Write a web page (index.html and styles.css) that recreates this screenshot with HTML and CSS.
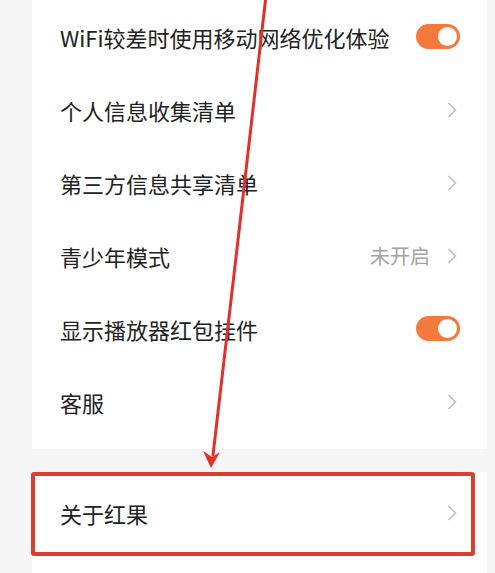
FILE: index.html
```html
<!DOCTYPE html>
<html lang="zh-CN">
<head>
<meta charset="utf-8">
<link rel="stylesheet" href="styles.css">
</head>
<body>
<div class="page">
  <div class="card card-top">
    <div class="row"><span class="label">WiFi较差时使用移动网络优化体验</span><span class="toggle"><span class="knob"></span></span></div>
    <div class="row"><span class="label">个人信息收集清单</span><svg class="chev" viewBox="0 0 10 16"><path d="M1.5 1 L8.5 8 L1.5 15"/></svg></div>
    <div class="row"><span class="label">第三方信息共享清单</span><svg class="chev" viewBox="0 0 10 16"><path d="M1.5 1 L8.5 8 L1.5 15"/></svg></div>
    <div class="row"><span class="label">青少年模式</span><span class="value">未开启</span><svg class="chev" viewBox="0 0 10 16"><path d="M1.5 1 L8.5 8 L1.5 15"/></svg></div>
    <div class="row"><span class="label">显示播放器红包挂件</span><span class="toggle"><span class="knob"></span></span></div>
    <div class="row"><span class="label">客服</span><svg class="chev" viewBox="0 0 10 16"><path d="M1.5 1 L8.5 8 L1.5 15"/></svg></div>
  </div>
  <div class="card card-bottom">
    <div class="row"><span class="label">关于红果</span><svg class="chev" viewBox="0 0 10 16"><path d="M1.5 1 L8.5 8 L1.5 15"/></svg></div>
  </div>
</div>
<div class="highlight"></div>
<svg class="arrow" width="495" height="573" viewBox="0 0 495 573">
  <path d="M265.5 0 L238 240 L213 455" fill="none" stroke="#e2302c" stroke-width="3" stroke-linecap="round"/>
  <path d="M203 451 L211 468 L220 452 L212 457 Z" fill="#e2302c"/>
</svg>
</body>
</html>
```

FILE: styles.css
```css
html, body {
  margin: 0;
  padding: 0;
  background: #f5f5f5;
}
body {
  width: 495px;
  height: 573px;
  overflow: hidden;
  position: relative;
  font-family: "Noto Sans CJK SC", "Noto Sans", sans-serif;
}
.page {
  padding: 0 8px 0 32px;
  display: flex;
  flex-direction: column;
  gap: 23px;
}
.card {
  background: #fefefe;
  display: flex;
  flex-direction: column;
}
.card-top {
  padding: 0 0 11px;
}
.card-bottom {
  padding: 4px 0 30px;
}
.row {
  height: 73px;
  display: flex;
  align-items: center;
  padding: 0 27px 0 28px;
}
.label {
  flex: 1;
  font-size: 22px;
  color: #222;
  white-space: nowrap;
  line-height: 1;
}
.value {
  font-size: 20px;
  color: #a3a3a3;
  margin-right: 17px;
  line-height: 1;
}
.chev {
  width: 10px;
  height: 16px;
  margin-right: 3px;
  fill: none;
  stroke: #bdbdbd;
  stroke-width: 1.5;
}
.toggle {
  width: 44px;
  height: 25px;
  border-radius: 13px;
  background: #f4793c;
  display: flex;
  align-items: center;
  justify-content: flex-end;
  padding-right: 3px;
  box-sizing: border-box;
}
.knob {
  width: 19px;
  height: 19px;
  border-radius: 50%;
  background: #fff;
}
.highlight {
  position: absolute;
  left: 31px;
  top: 472px;
  width: 444px;
  height: 84px;
  box-sizing: border-box;
  border: 4px solid #d8402f;
  border-radius: 3px;
}
.arrow {
  position: absolute;
  left: 0;
  top: 0;
}
```
